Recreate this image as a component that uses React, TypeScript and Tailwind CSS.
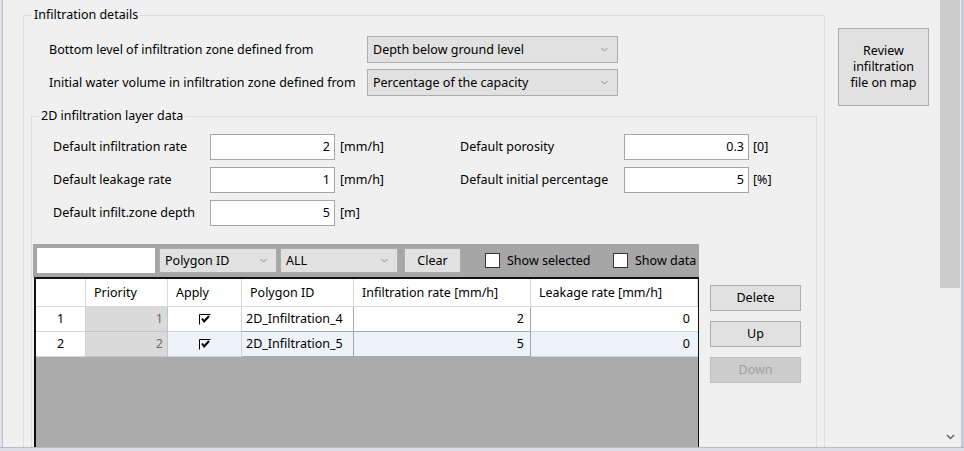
import React from 'react';

const Chevron: React.FC<{ color?: string }> = ({ color = '#8a8a8a' }) => (
  <svg width="7" height="5" viewBox="0 0 7 5">
    <path d="M0.5 1 L3.5 4 L6.5 1" fill="none" stroke={color} strokeWidth="1" />
  </svg>
);

const Combo: React.FC<{ value: string; className: string }> = ({ value, className }) => (
  <div className={`flex items-center justify-between bg-[#e1e1e1] border border-[#adadad] pl-[5px] pr-[9px] ${className}`}>
    <span>{value}</span>
    <Chevron />
  </div>
);

const Field: React.FC<{ value: string }> = ({ value }) => (
  <div className="h-[26px] bg-white border border-[#a6a6a6] flex items-center justify-end pr-[4px]">{value}</div>
);

const Tick = () => (
  <svg width="12" height="11" viewBox="0 0 12 11">
    <path d="M0.5 0.5 H11.5 M0.5 0.5 V10.5" fill="none" stroke="#000" strokeWidth="1" />
    <path d="M3 4.5 L5.2 7.5 L10 2" fill="none" stroke="#000" strokeWidth="2" />
  </svg>
);

const rows = [
  { n: 1, id: '2D_Infiltration_4', rate: '2', leak: '0', alt: false },
  { n: 2, id: '2D_Infiltration_5', rate: '5', leak: '0', alt: true },
];

const headers = ['', 'Priority', 'Apply', 'Polygon ID', 'Infiltration rate [mm/h]', 'Leakage rate [mm/h]'];

const App: React.FC = () => {
  return (
    <div className="w-[964px] h-[451px] bg-[#f0f0f0] flex flex-col overflow-hidden text-[12.5px] leading-[16px] text-black font-['Noto_Sans',sans-serif]">
      <div className="flex flex-1 min-h-0">
        <div className="w-[3px] bg-[#dfe2e7] border-r border-[#b9bec6]" />

        <div className="flex flex-1 min-w-0 pl-[20px] pt-[7px] overflow-hidden">
          {/* Infiltration details */}
          <fieldset className="w-[802px] h-[480px] shrink-0 border border-[#dcdcdc]">
            <legend className="ml-[8px] px-[2px]">Infiltration details</legend>

            <div className="mt-[13px] pl-[25px] flex flex-col gap-[6px]">
              <div className="flex items-center">
                <span className="w-[318px]">Bottom level of infiltration zone defined from</span>
                <Combo value="Depth below ground level" className="w-[251px] h-[27px]" />
              </div>
              <div className="flex items-center">
                <span className="w-[318px]">Initial water volume in infiltration zone defined from</span>
                <Combo value="Percentage of the capacity" className="w-[251px] h-[27px]" />
              </div>
            </div>

            {/* 2D infiltration layer data */}
            <fieldset className="mt-[12px] mx-[7px] h-[400px] border border-[#dcdcdc]">
              <legend className="ml-[7px] px-[2px]">2D infiltration layer data</legend>

              <div className="mt-[10px] pl-[21px] grid grid-cols-[157px_125px_125px_164px_125px_auto] gap-y-[7px] items-center">
                <span>Default infiltration rate</span>
                <Field value="2" />
                <span className="pl-[5px]">[mm/h]</span>
                <span>Default porosity</span>
                <Field value="0.3" />
                <span className="pl-[4px]">[0]</span>

                <span>Default leakage rate</span>
                <Field value="1" />
                <span className="pl-[5px]">[mm/h]</span>
                <span>Default initial percentage</span>
                <Field value="5" />
                <span className="pl-[4px]">[%]</span>

                <span>Default infilt.zone depth</span>
                <Field value="5" />
                <span className="pl-[5px]">[m]</span>
              </div>

              <div className="mt-[18px] ml-[1px] flex">
                <div className="w-[666px] flex flex-col">
                  {/* toolbar */}
                  <div className="h-[33px] bg-[#a6a6a6] flex items-center pl-[4px] overflow-hidden whitespace-nowrap">
                    <div className="w-[118px] h-[25px] bg-white shrink-0" />
                    <Combo value="Polygon ID" className="ml-[4px] w-[118px] h-[25px] shrink-0" />
                    <Combo value="ALL" className="ml-[3px] w-[118px] h-[25px] shrink-0" />
                    <div className="ml-[6px] w-[57px] h-[25px] shrink-0 bg-[#e1e1e1] border border-[#adadad] flex items-center justify-center">Clear</div>
                    <div className="ml-[24px] w-[128px] shrink-0 flex items-center">
                      <div className="w-[15px] h-[15px] bg-white border border-[#333]" />
                      <span className="ml-[7px]">Show selected</span>
                    </div>
                    <div className="shrink-0 flex items-center">
                      <div className="w-[15px] h-[15px] bg-white border border-[#333]" />
                      <span className="ml-[7px]">Show data</span>
                    </div>
                  </div>

                  {/* grid */}
                  <div className="ml-[1px] w-[665px] h-[200px] bg-[#ababab] border-l-2 border-t-2 border-r border-[#111]">
                    <div className="grid grid-cols-[50px_82px_74px_112px_177px_167px]">
                      {headers.map((h, i) => (
                        <div key={i} className="h-[28px] bg-white border-r border-b border-[#dadada] flex items-center pl-[8px]">{h}</div>
                      ))}
                      {rows.map(r => (
                        <React.Fragment key={r.n}>
                          <div className="h-[25px] bg-white border-r border-b border-[#d4d4d4] flex items-center justify-center">{r.n}</div>
                          <div className="h-[25px] bg-[#dadada] border-r border-b border-[#c4c4c4] flex items-center justify-end pr-[4px] text-[#6b6b6b]">{r.n}</div>
                          <div className={`h-[25px] border-r border-b border-[#d4d4d4] flex items-center justify-center ${r.alt ? 'bg-[#eef3fa]' : 'bg-white'}`}>
                            <Tick />
                          </div>
                          <div className={`h-[25px] border-r border-b border-[#a8a8a8] flex items-center pl-[4px] ${r.alt ? 'bg-[#eef3fa]' : 'bg-white'}`}>{r.id}</div>
                          <div className={`h-[25px] border-r border-b border-[#a8a8a8] flex items-center justify-end pr-[6px] ${r.alt ? 'bg-[#eef3fa]' : 'bg-white'}`}>{r.rate}</div>
                          <div className={`h-[25px] border-b border-[#d4d4d4] flex items-center justify-end pr-[8px] ${r.alt ? 'bg-[#eef3fa]' : 'bg-white'}`}>{r.leak}</div>
                        </React.Fragment>
                      ))}
                    </div>
                  </div>
                </div>

                <div className="ml-[11px] mt-[41px] w-[91px] flex flex-col gap-[10px]">
                  <div className="h-[26px] bg-[#e1e1e1] border border-[#adadad] flex items-center justify-center">Delete</div>
                  <div className="h-[26px] bg-[#e1e1e1] border border-[#adadad] flex items-center justify-center">Up</div>
                  <div className="h-[26px] bg-[#cccccc] border border-[#bfbfbf] flex items-center justify-center text-[#a0a0a0]">Down</div>
                </div>
              </div>
            </fieldset>
          </fieldset>

          <div className="ml-[13px] mt-[21px] w-[91px] h-[78px] shrink-0 bg-[#e1e1e1] border border-[#adadad] flex items-center justify-center text-center">
            Review<br />infiltration<br />file on map
          </div>
        </div>

        {/* scrollbar */}
        <div className="w-[20px] flex flex-col bg-[#f0f0f0]">
          <div className="h-[288px] bg-[#cdcdcd]" />
          <div className="flex-1" />
          <div className="h-[20px] flex items-center justify-center">
            <svg width="9" height="6" viewBox="0 0 9 6">
              <path d="M1 1 L4.5 4.5 L8 1" fill="none" stroke="#606060" strokeWidth="1.5" />
            </svg>
          </div>
        </div>
        <div className="w-[4px] bg-[#c6cad2] border-l border-[#eceef1]" />
      </div>
      <div className="h-[4px] border-t border-[#b8bdc5] bg-[#dadde2]" />
    </div>
  );
};

export default App;
